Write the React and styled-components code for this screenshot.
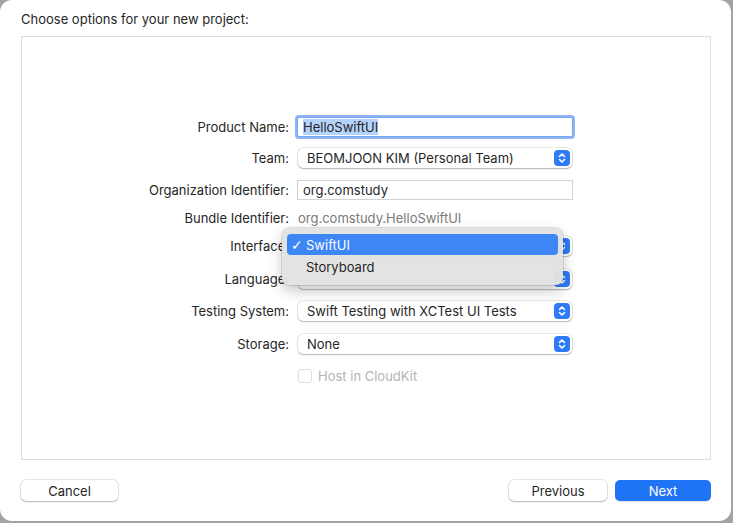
import React from "react";
import styled, { createGlobalStyle } from "styled-components";

const GlobalStyle = createGlobalStyle`
  html, body {
    margin: 0;
    padding: 0;
    background: #a3a3a3;
  }
  body {
    font-family: Inter, "Liberation Sans", sans-serif;
    font-size: 13px;
    color: #262626;
  }
`;

const Window = styled.div`
  width: 731px;
  height: 521px;
  background: #ffffff;
  border-radius: 12px;
  box-sizing: border-box;
  display: flex;
  flex-direction: column;
  padding: 12px 20px 0 21px;
`;

const Title = styled.div`
  height: 15px;
  line-height: 15px;
  margin-bottom: 9px;
  flex-shrink: 0;
`;

const Panel = styled.div`
  height: 424px;
  flex-shrink: 0;
  box-sizing: border-box;
  border: 1px solid #dedede;
  display: flex;
  justify-content: flex-start;
`;

const Form = styled.div`
  display: flex;
  flex-direction: column;
  padding-top: 80px;
  position: relative;
`;

const Row = styled.div`
  display: flex;
  align-items: center;
  height: 20px;
  margin-top: ${(p) => p.$top || 0}px;
`;

const Label = styled.div`
  width: 275px;
  text-align: right;
  padding-right: 8px;
  box-sizing: border-box;
  white-space: nowrap;
  color: #262626;
`;

const TextField = styled.div`
  width: 276px;
  height: 20px;
  box-sizing: border-box;
  border: 1px solid ${(p) => (p.$focus ? "#7aa7f3" : "#d2d2d2")};
  box-shadow: ${(p) => (p.$focus ? "0 0 0 2px #8db4f5" : "none")};
  border-radius: ${(p) => (p.$focus ? "2px" : "0")};
  display: flex;
  align-items: center;
  padding-left: 5px;
  background: #fff;
`;

const Selected = styled.span`
  background: #b4d3fb;
  line-height: 16px;
`;

const Popup = styled.div`
  width: 274px;
  height: 20px;
  margin-left: 1px;
  box-sizing: border-box;
  border-radius: 5px;
  background: #fff;
  box-shadow: 0 0 0 0.5px rgba(0, 0, 0, 0.18), 0 1px 1.5px rgba(0, 0, 0, 0.22);
  display: flex;
  align-items: center;
  justify-content: space-between;
  padding: 0 2px 0 9px;
`;

const Stepper = styled.div`
  width: 16px;
  height: 16px;
  border-radius: 4px;
  background: #2f7bf6;
  display: flex;
  align-items: center;
  justify-content: center;
`;

const PlainValue = styled.div`
  color: #7a7a7a;
  padding-left: 1px;
`;

const Check = styled.div`
  width: 12px;
  height: 12px;
  margin-left: 1px;
  border: 1px solid #dedede;
  border-radius: 3px;
  margin-right: 6px;
`;

const Disabled = styled.span`
  color: #b4b4b4;
`;

const Menu = styled.div`
  position: absolute;
  left: 260px;
  top: 191px;
  width: 281px;
  height: 57px;
  box-sizing: border-box;
  background: rgba(226, 226, 226, 0.97);
  border-radius: 7px;
  box-shadow: 0 0 0 0.5px rgba(0, 0, 0, 0.2), 0 6px 14px rgba(0, 0, 0, 0.22);
  padding: 6px 5px;
  display: flex;
  flex-direction: column;
  gap: 1px;
`;

const MenuItem = styled.div`
  height: 21px;
  border-radius: 4px;
  display: flex;
  align-items: center;
  padding-left: 4px;
  background: ${(p) => (p.$active ? "#3d86f5" : "transparent")};
  color: ${(p) => (p.$active ? "#fff" : "#262626")};
`;

const Tick = styled.span`
  width: 15px;
  display: inline-block;
  font-size: 14px;
  font-weight: 700;
  font-family: "DejaVu Sans", sans-serif;
`;

const Footer = styled.div`
  display: flex;
  align-items: center;
  height: 61px;
  flex-shrink: 0;
  gap: 8px;
`;

const Spacer = styled.div`
  flex: 1;
`;

const Button = styled.div`
  width: ${(p) => p.$w}px;
  height: 21px;
  box-sizing: border-box;
  border-radius: 5px;
  display: flex;
  align-items: center;
  justify-content: center;
  background: ${(p) => (p.$primary ? "#1f74f6" : "#fff")};
  color: ${(p) => (p.$primary ? "#fff" : "#262626")};
  box-shadow: ${(p) =>
    p.$primary
      ? "0 1px 1px rgba(0,0,0,0.12)"
      : "0 0 0 0.5px rgba(0,0,0,0.2), 0 1px 1.5px rgba(0,0,0,0.2)"};
`;

const Arrows = () => (
  <svg width="10" height="12" viewBox="0 0 10 12">
    <path d="M2.5 4.5 L5 2 L7.5 4.5 M2.5 7.5 L5 10 L7.5 7.5" fill="none" stroke="#fff" strokeWidth="1.6" strokeLinecap="round" strokeLinejoin="round" />
  </svg>
);

const PopupField = ({ value }) => (
  <Popup>
    <span>{value}</span>
    <Stepper>
      <Arrows />
    </Stepper>
  </Popup>
);

export default function App() {
  return (
    <>
      <GlobalStyle />
      <Window>
        <Title>Choose options for your new project:</Title>
        <Panel>
          <Form>
            <Row>
              <Label>Product Name:</Label>
              <TextField $focus>
                <Selected>HelloSwiftUI</Selected>
              </TextField>
            </Row>
            <Row $top={11}>
              <Label>Team:</Label>
              <PopupField value="BEOMJOON KIM (Personal Team)" />
            </Row>
            <Row $top={12}>
              <Label>Organization Identifier:</Label>
              <TextField>org.comstudy</TextField>
            </Row>
            <Row $top={8}>
              <Label>Bundle Identifier:</Label>
              <PlainValue>org.comstudy.HelloSwiftUI</PlainValue>
            </Row>
            <Row $top={8}>
              <Label>Interface:</Label>
              <PopupField value="" />
            </Row>
            <Row $top={13}>
              <Label>Language:</Label>
              <PopupField value="" />
            </Row>
            <Row $top={12}>
              <Label>Testing System:</Label>
              <PopupField value="Swift Testing with XCTest UI Tests" />
            </Row>
            <Row $top={13}>
              <Label>Storage:</Label>
              <PopupField value="None" />
            </Row>
            <Row $top={12}>
              <Label />
              <Check />
              <Disabled>Host in CloudKit</Disabled>
            </Row>
            <Menu>
              <MenuItem $active>
                <Tick>✓</Tick>SwiftUI
              </MenuItem>
              <MenuItem>
                <Tick />Storyboard
              </MenuItem>
            </Menu>
          </Form>
        </Panel>
        <Footer>
          <Button $w={97}>Cancel</Button>
          <Spacer />
          <Button $w={98}>Previous</Button>
          <Button $w={96} $primary>Next</Button>
        </Footer>
      </Window>
    </>
  );
}
